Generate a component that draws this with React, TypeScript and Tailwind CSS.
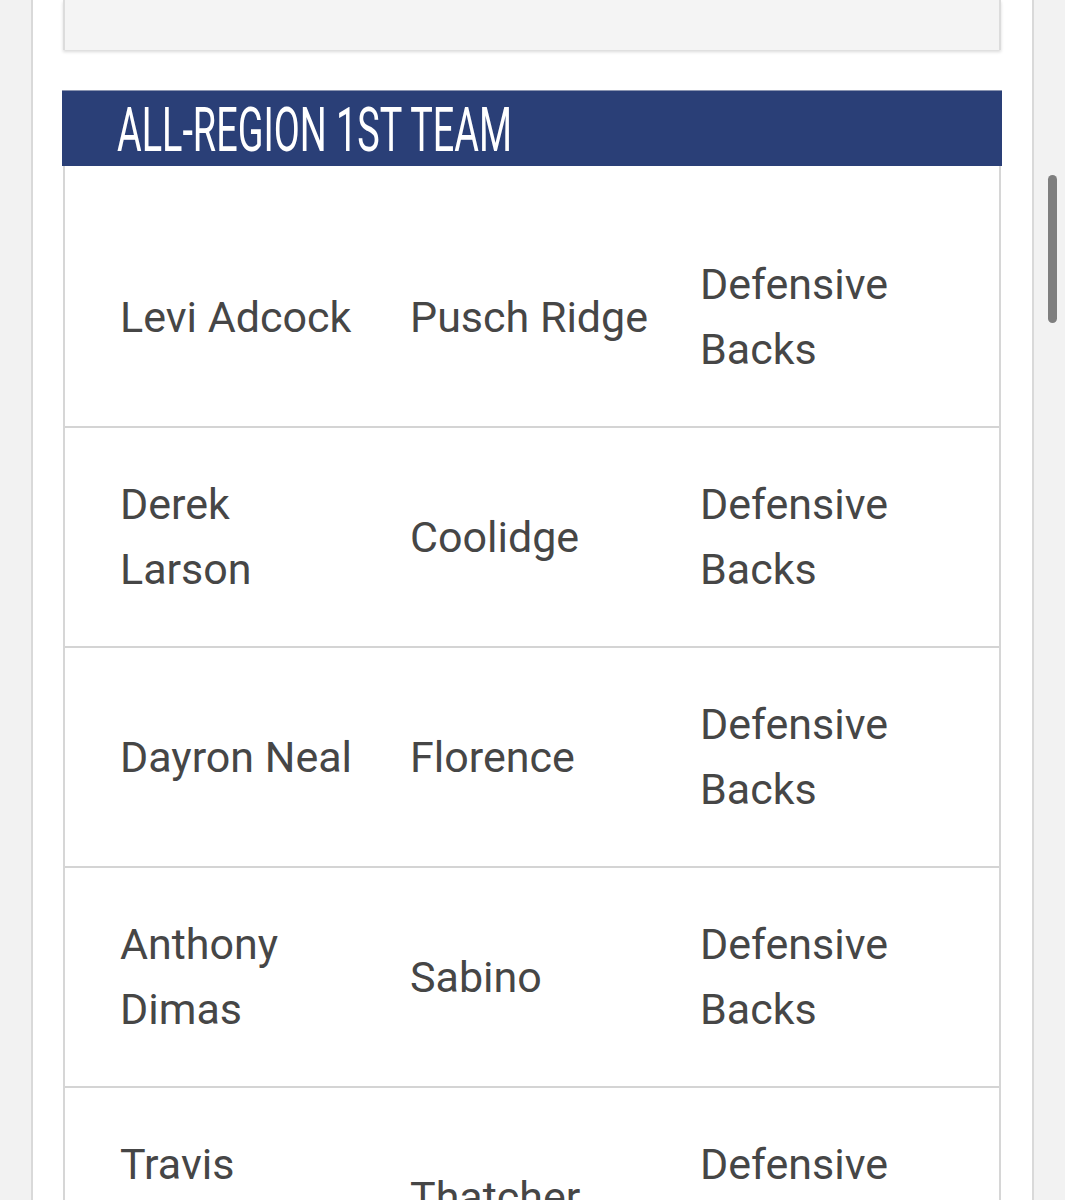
import React from "react";

const rows: [string, string, string][] = [
  ["Levi Adcock", "Pusch Ridge", "Defensive Backs"],
  ["Derek Larson", "Coolidge", "Defensive Backs"],
  ["Dayron Neal", "Florence", "Defensive Backs"],
  ["Anthony Dimas", "Sabino", "Defensive Backs"],
  ["Travis Johnson", "Thatcher", "Defensive Backs"],
];

export default function App() {
  return (
    <div className="relative h-[1200px] overflow-hidden bg-[#f2f2f2] pt-[7px]">
      <div className="ml-[31px] w-[1003px] h-[1200px] bg-white border-x-2 border-[#d9d9d9] pl-[29px] pr-[30px]">
        <div className="-mt-[7px] h-[50px] mx-px bg-[#f4f4f4] border-x-2 border-[#dcdcdc] shadow-[0_2px_3px_rgba(0,0,0,0.15)]" />
        <div className="mt-[40px] h-[76px] bg-[#2a3f77] border-t border-[#8a94b0] pl-[55px] flex items-center overflow-hidden">
          <span
            className="inline-block whitespace-nowrap text-white text-[61px] leading-none origin-left scale-x-[0.62] pt-[4px]"
            style={{ fontFamily: "Roboto, 'Liberation Sans', sans-serif" }}
          >
            ALL-REGION 1ST TEAM
          </span>
        </div>
        <div
          className="mx-px border-x-2 border-[#d6d6d6] text-[#464646] text-[43px] leading-[65px]"
          style={{ fontFamily: "Roboto, 'Liberation Sans', sans-serif" }}
        >
          {rows.map((r, i) => (
            <div
              key={i}
              className={
                "grid grid-cols-[290px_290px_1fr] items-center pl-[55px] border-b-2 border-[#d4d4d4] " +
                (i === 0 ? "h-[262px] pt-[42px]" : "h-[220px]")
              }
            >
              <div className="pr-[46px]">{r[0]}</div>
              <div className="pr-[46px]">{r[1]}</div>
              <div className="pr-[46px] w-[290px]">{r[2]}</div>
            </div>
          ))}
        </div>
      </div>
      <div className="absolute left-[1048px] top-[175px] w-[9px] h-[148px] rounded-full bg-[#7f7f7f]" />
    </div>
  );
}
